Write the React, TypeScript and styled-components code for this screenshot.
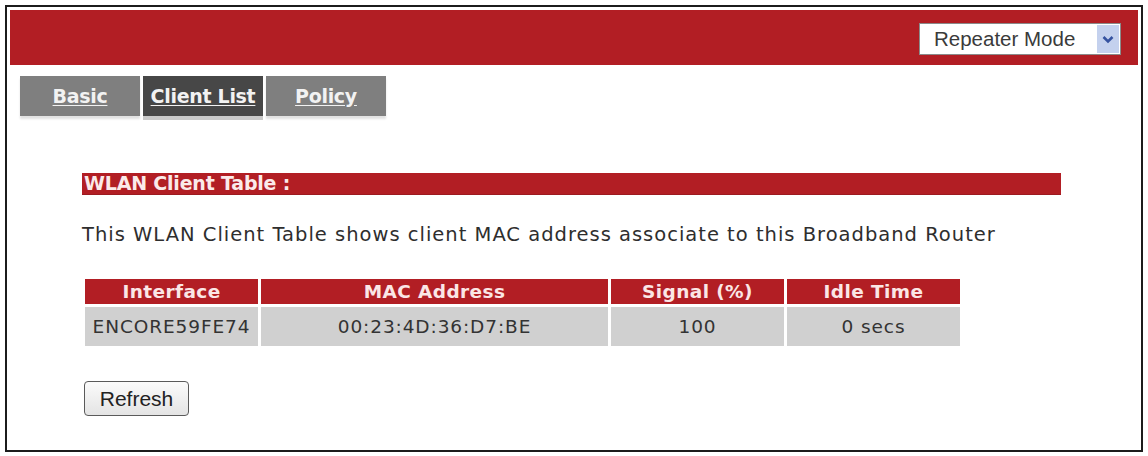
import React from 'react'
import styled, {createGlobalStyle} from 'styled-components'

const GlobalStyle = createGlobalStyle`
  html, body {
    margin: 0;
    padding: 0;
    background: #ffffff;
  }
  body {
    font-family: "DejaVu Sans", Verdana, sans-serif;
    color: #333;
  }
`

const RED = '#b21e24'

const Frame = styled.div`
  box-sizing: border-box;
  margin: 5px;
  height: 447px;
  border: 2px solid #1c1c1c;
  padding: 3px;
`

const TopBar = styled.div`
  height: 55px;
  background: ${RED};
  display: flex;
  justify-content: flex-end;
  align-items: flex-start;
  padding: 13px 17px 0 0;
  box-sizing: border-box;
`

const ModeSelect = styled.div`
  box-sizing: border-box;
  width: 202px;
  height: 32px;
  background: #fff;
  border: 1px solid #8a8a8a;
  display: flex;
  align-items: center;
  justify-content: space-between;
  padding: 0 1px 0 14px;
  font-family: "Liberation Sans", Arial, sans-serif;
  font-size: 20.5px;
  color: #3a3a3a;
`

const ArrowBox = styled.div`
  width: 22px;
  height: 28px;
  background: #c4d1ee;
  display: flex;
  align-items: center;
  justify-content: center;
`

const TabRow = styled.div`
  display: flex;
  gap: 3px;
  margin: 11px 0 0 10px;
`

const Tab = styled.a<{ $active?: boolean }>`
  width: 120px;
  height: 40px;
  display: flex;
  align-items: center;
  justify-content: center;
  background: ${p => (p.$active ? '#474747' : '#7f7f7f')};
  box-shadow: ${p => (p.$active ? '0 4px 0 #c9c9c9' : '0 3px 2px #e2e2e2')};
  color: #f2f2f2;
  font-weight: bold;
  font-size: 19px;
  text-decoration: underline;
  text-underline-offset: 2px;
  letter-spacing: -0.3px;
  cursor: pointer;
`

const Content = styled.div`
  padding: 57px 0 0 72px;
`

const SectionBar = styled.div`
  width: 979px;
  height: 22px;
  background: ${RED};
  border-bottom: 1px solid #9c1a20;
  box-sizing: border-box;
  color: #fbeaea;
  font-weight: bold;
  font-size: 19px;
  line-height: 21px;
  padding-left: 2px;
  letter-spacing: -0.2px;
`

const Description = styled.p`
  margin: 28px 0 0 0;
  font-size: 19.5px;
  line-height: 23px;
  letter-spacing: 1px;
  color: #2e2e2e;
`

const ClientTable = styled.table`
  margin: 30px 0 0 0;
  border-collapse: separate;
  border-spacing: 3px;
`

const HeadCell = styled.th<{ $w: number }>`
  width: ${p => p.$w}px;
  height: 25px;
  padding: 0;
  background: ${RED};
  color: #fbe6e6;
  font-size: 18.5px;
  font-weight: bold;
  text-align: center;
  letter-spacing: 0.4px;
`

const DataCell = styled.td`
  height: 39px;
  padding: 0;
  background: #d0d0d0;
  color: #333;
  font-size: 18.5px;
  letter-spacing: 0.9px;
  text-align: center;
`

const RefreshButton = styled.button`
  margin: 32px 0 0 2px;
  width: 105px;
  height: 35px;
  border: 1px solid #5a5a5a;
  border-radius: 4px;
  background: linear-gradient(#fbfbfb, #e4e4e4);
  font-family: "Liberation Sans", Arial, sans-serif;
  font-size: 21px;
  color: #222;
  padding: 0;
`

const columns = [
    {label: 'Interface', width: 173},
    {label: 'MAC Address', width: 347},
    {label: 'Signal (%)', width: 173},
    {label: 'Idle Time', width: 173},
]

const clients = [
    {iface: 'ENCORE59FE74', mac: '00:23:4D:36:D7:BE', signal: '100', idle: '0 secs'},
]

const App: React.FC = () => {
    return <>
        <GlobalStyle/>
        <Frame>
            <TopBar>
                <ModeSelect>
                    <span>Repeater Mode</span>
                    <ArrowBox>
                        <svg width="12" height="9" viewBox="0 0 12 9">
                            <path d="M1.5 2 L6 6.5 L10.5 2" fill="none" stroke="#3552a0" strokeWidth="2.6"/>
                        </svg>
                    </ArrowBox>
                </ModeSelect>
            </TopBar>
            <TabRow>
                <Tab>Basic</Tab>
                <Tab $active>Client List</Tab>
                <Tab>Policy</Tab>
            </TabRow>
            <Content>
                <SectionBar>WLAN Client Table :</SectionBar>
                <Description>This WLAN Client Table shows client MAC address associate to this Broadband Router</Description>
                <ClientTable>
                    <thead>
                    <tr>
                        {columns.map(c => <HeadCell key={c.label} $w={c.width}>{c.label}</HeadCell>)}
                    </tr>
                    </thead>
                    <tbody>
                    {clients.map(c => <tr key={c.mac}>
                        <DataCell>{c.iface}</DataCell>
                        <DataCell>{c.mac}</DataCell>
                        <DataCell>{c.signal}</DataCell>
                        <DataCell>{c.idle}</DataCell>
                    </tr>)}
                    </tbody>
                </ClientTable>
                <RefreshButton>Refresh</RefreshButton>
            </Content>
        </Frame>
    </>
}

export default App
